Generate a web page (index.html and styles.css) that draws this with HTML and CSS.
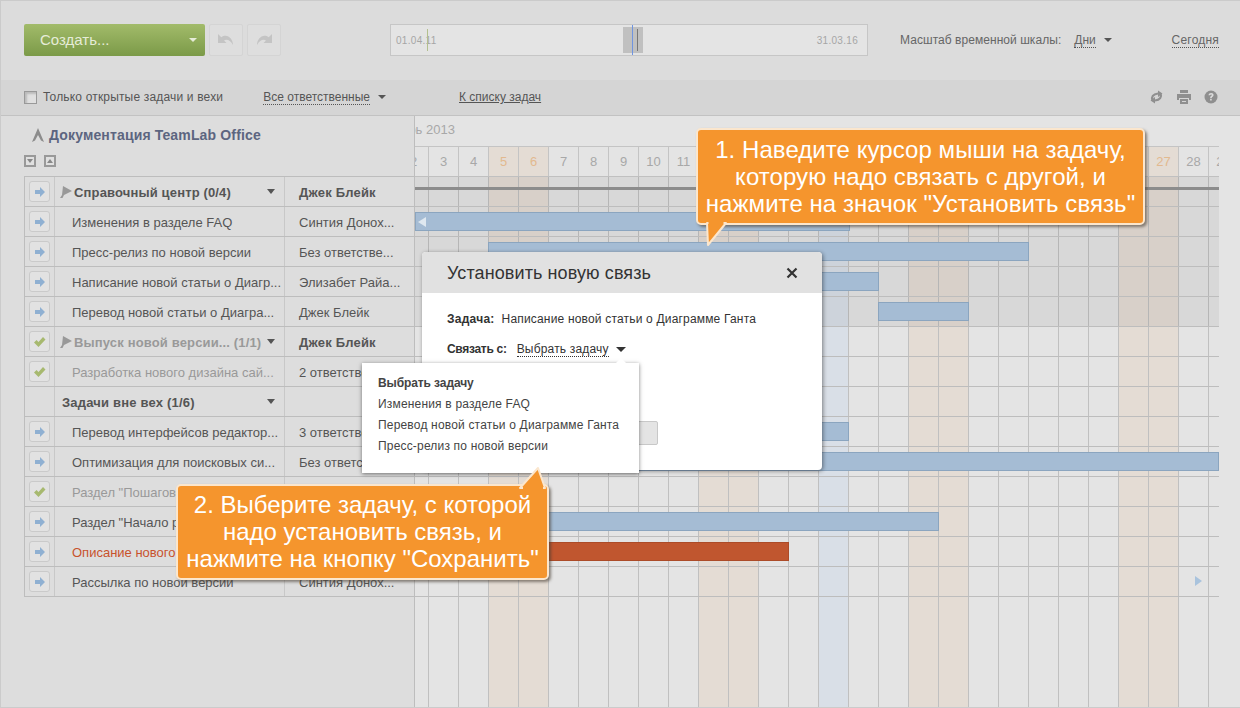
FILE: index.html
```html
<!DOCTYPE html>
<html lang="ru">
  <head>
    <meta charset="UTF-8" />
    <title>Диаграмма Ганта</title>
    <link rel="stylesheet" href="styles.css">
  </head>
  <body>
    <div class="page">
      <!-- Верхняя панель -->
      <header class="topbar">
        <button class="create-btn"><span>Создать...</span><i class="caret caret-light"></i></button>
        <button class="hist-btn">
          <svg width="18" height="14" viewBox="0 0 18 14"><path d="M1 1v9h8.500L7 7.500C9.500 6 13 6.500 16 12 16 5.500 10 0 4.300 4.300Z" fill="#c4c4c4"/></svg>
        </button>
        <button class="hist-btn">
          <svg width="18" height="14" viewBox="0 0 18 14"><path d="M17 1v9H8.500L11 7.500C8.500 6 5 6.500 2 12 2 5.500 8 0 13.700 4.300Z" fill="#c4c4c4"/></svg>
        </button>
        <div class="timeline">
          <span class="timeline-date">01.04.11</span>
          <i class="timeline-start"></i>
          <div class="timeline-thumb"><i class="now"></i><i class="grip"></i></div>
          <span class="timeline-date timeline-end">31.03.16</span>
        </div>
        <span class="scale-label">Масштаб временной шкалы:</span>
        <a class="dotted scale-value">Дни</a>
        <i class="caret"></i>
        <a class="dotted today-link">Сегодня</a>
      </header>

      <!-- Фильтры -->
      <div class="filterbar">
        <span class="checkbox"></span>
        <span class="filter-label">Только открытые задачи и вехи</span>
        <a class="dotted filter-resp">Все ответственные</a>
        <i class="caret"></i>
        <a class="list-link">К списку задач</a>
        <div class="tools">
          <svg width="15" height="14" viewBox="0 0 15 14"><path d="M3.500 10.500C2 7 4 4 9 3.500M11.500 3.500C13 7 11 10 6 10.500" fill="none" stroke="#8f8f8f" stroke-width="2.200"/><path d="M9 .5l4.500 3L9 7ZM6 13.500l-4.500-3L6 7Z" fill="#8f8f8f"/></svg>
          <svg width="14" height="14" viewBox="0 0 14 14"><path d="M3 0h8v3H3ZM0 4h14v6h-2V8H2v2H0ZM3 9h8v5H3Zm2 2v1h4v-1Z" fill="#8f8f8f"/></svg>
          <svg width="14" height="14" viewBox="0 0 14 14"><circle cx="7" cy="7" r="6.500" fill="#8f8f8f"/><path d="M4.500 5.200C4.700 3.700 5.700 3 7.100 3c1.500 0 2.500.9 2.500 2.100 0 1.800-1.900 1.700-1.900 3.100H6.100c0-2.200 1.800-2.200 1.800-3.100 0-.4-.3-.7-.8-.7-.6 0-.9.400-1 .9ZM6.100 9h1.600v1.600H6.100Z" fill="#dcdcdc"/></svg>
        </div>
      </div>

      <main class="workspace">
        <!-- Список задач -->
        <section class="tasks">
          <h1 class="project-title">
            <svg width="12" height="14" viewBox="0 0 12 14"><path d="M6 0l6 14-3-1.500L6 7 3 12.500 0 14Z" fill="#8c8c8c"/></svg>
            Документация TeamLab Office
          </h1>
          <div class="collapse-btns">
            <span class="collapse-btn"><i class="tri-down"></i></span>
            <span class="collapse-btn"><i class="tri-up"></i></span>
          </div>
          <div class="task-table" id="taskTable"></div>
        </section>

        <!-- Шкала -->
        <section class="chart">
          <div class="month">Октябрь 2013</div>
          <div class="days" id="days"></div>
          <div class="chart-body">
            <div class="columns" id="columns"></div>
            <div class="hover-band"></div>
            <div class="chart-rows" id="chartRows"></div>
          </div>
        </section>
      </main>

      <!-- Диалог связи -->
      <div class="dialog">
        <div class="dialog-head">
          <span class="dialog-title">Установить новую связь</span>
          <svg width="12" height="12" viewBox="0 0 12 12"><path d="M1.500 1.500l9 9M10.500 1.500l-9 9" stroke="#333" stroke-width="2.200"/></svg>
        </div>
        <div class="dialog-body">
          <p class="dialog-row"><b class="label-task">Задача:</b><span>Написание новой статьи о Диаграмме Ганта</span></p>
          <p class="dialog-row"><b class="label-link">Связать с:</b><a class="dotted link-select">Выбрать задачу</a><i class="caret caret-dark"></i></p>
          <button class="dialog-btn">Сохранить</button>
        </div>
      </div>
      <ul class="dropdown">
        <li class="selected">Выбрать задачу</li>
        <li>Изменения в разделе FAQ</li>
        <li>Перевод новой статьи о Диаграмме Ганта</li>
        <li>Пресс-релиз по новой версии</li>
      </ul>

      <!-- Подсказки -->
      <div class="callout callout-one">
        <svg class="tail" width="26" height="26" viewBox="0 0 26 26"><path d="M2 0L3 22 21 0Z" fill="#f5952d" stroke="#fbe6cd" stroke-width="2" stroke-linejoin="round"/><path d="M3.500 1h15v-3h-15Z" fill="#f5952d"/></svg>
        1. Наведите курсор мыши на задачу,<br>которую надо связать с другой, и<br>нажмите на значок "Установить связь"
      </div>
      <div class="callout callout-two">
        <svg class="tail" width="32" height="24" viewBox="0 0 32 24"><path d="M5 22L23 2 30 22Z" fill="#f5952d" stroke="#fbe6cd" stroke-width="2" stroke-linejoin="round"/><path d="M8 20h20v4H8Z" fill="#f5952d"/></svg>
        2. Выберите задачу, с которой<br>надо установить связь, и<br>нажмите на кнопку "Сохранить"
      </div>
    </div>

    <script src="gantt.js"></script>
  </body>
</html>
```

FILE: gantt.js
```js
// Строки таблицы: kind - group / task, state - open / done / late
const rows = [
  { icon: 'arrow', kind: 'group', flag: true, title: 'Справочный центр (0/4)', resp: 'Джек Блейк' },
  { icon: 'arrow', title: 'Изменения в разделе FAQ', resp: 'Синтия Донох...', bar: [0, 435], back: true },
  { icon: 'arrow', title: 'Пресс-релиз по новой версии', resp: 'Без ответстве...', bar: [73, 541] },
  { icon: 'arrow', title: 'Написание новой статьи о Диагр...', resp: 'Элизабет Райа...', bar: [73, 391] },
  { icon: 'arrow', title: 'Перевод новой статьи о Диагра...', resp: 'Джек Блейк', bar: [463, 91] },
  { icon: 'check', kind: 'group', flag: true, state: 'done', title: 'Выпуск новой версии... (1/1)', resp: 'Джек Блейк' },
  { icon: 'check', state: 'done', title: 'Разработка нового дизайна сай...', resp: '2 ответстве...' },
  { kind: 'free', title: 'Задачи вне вех (1/6)', resp: '' },
  { icon: 'arrow', title: 'Перевод интерфейсов редактор...', resp: '3 ответстве...', bar: [73, 361] },
  { icon: 'arrow', title: 'Оптимизация для поисковых си...', resp: 'Без ответстве...', bar: [73, 731] },
  { icon: 'check', state: 'done', title: 'Раздел "Пошаговое руководство"', resp: 'Джек Блейк' },
  { icon: 'arrow', title: 'Раздел "Начало работы"', resp: 'Джек Блейк', bar: [73, 451] },
  { icon: 'arrow', state: 'late', title: 'Описание нового функционала', resp: 'Джек Блейк', bar: [73, 301], red: true },
  { icon: 'arrow', title: 'Рассылка по новой версии', resp: 'Синтия Донох...', next: true },
];

const ICONS = {
  arrow: '<svg width="10" height="10" viewBox="0 0 10 10"><path d="M0 3h5V0l5 5-5 5V7H0Z" fill="#8fb0d2"/></svg>',
  check: '<svg width="12" height="10" viewBox="0 0 12 10"><path d="M0 5.500L2.500 3l2 2L9 0l2.500 2.500L4.500 10Z" fill="#a7b96f"/></svg>',
};
const FLAG = '<svg class="flag" width="12" height="14" viewBox="0 0 12 14"><path d="M3 1l9 5-8 4-1.500 3H0l2-3Z" fill="#999"/></svg>';

const taskTable = document.getElementById('taskTable');
const chartRows = document.getElementById('chartRows');

rows.forEach((row, i) => {
  const kind = row.kind || 'task';
  const state = row.state || 'open';
  const iconBox = row.icon ? `<span class="icon-box">${ICONS[row.icon]}</span>` : '';
  const caret = kind === 'task' ? '' : '<i class="caret caret-row"></i>';

  taskTable.insertAdjacentHTML('beforeend', `
    <div class="task-row">
      <div class="cell cell-icon">${iconBox}</div>
      <div class="cell cell-title ${kind} ${state}">${row.flag ? FLAG : ''}<span class="title-text">${row.title}</span>${caret}</div>
      <div class="cell cell-resp ${kind === 'task' ? '' : 'strong'}">${row.resp}</div>
    </div>`);

  let inner = '';
  if (row.bar) {
    const cls = row.red ? 'bar bar-red' : 'bar';
    inner = `<div class="${cls}" style="margin-left:${row.bar[0]}px;width:${row.bar[1]}px">${row.back ? '<i class="bar-back"></i>' : ''}</div>`;
  }
  if (i === 0) inner = '<div class="milestone-line"></div>';
  if (row.next) inner = '<i class="scroll-next"></i>';
  chartRows.insertAdjacentHTML('beforeend', `<div class="chart-row">${inner}</div>`);
});

// Дни месяца, начиная со 2 октября
const days = document.getElementById('days');
const columns = document.getElementById('columns');
for (let d = 2; d <= 29; d++) {
  const weekend = [5, 6, 12, 13, 19, 20, 26, 27].includes(d);
  const cls = weekend ? 'weekend' : d === 16 ? 'today' : '';
  days.insertAdjacentHTML('beforeend', `<div class="day ${weekend ? 'weekend' : ''}">${d}</div>`);
  columns.insertAdjacentHTML('beforeend', `<div class="col ${cls}"></div>`);
}
```

FILE: styles.css
```css
* {
  box-sizing: border-box;
}

body {
  margin: 0;
  background-color: #e4e4e4;
  font-family: "Liberation Sans", Arial, sans-serif;
  font-size: 12px;
  color: #555;
  overflow: hidden;
}

.page {
  position: relative;
  width: 1240px;
  height: 708px;
  display: flex;
  flex-direction: column;
  overflow: hidden;
  border-top: 1px solid #cbcbcb;
  border-left: 1px solid #cbcbcb;
  border-bottom: 1px solid #cbcbcb;
}

i {
  display: inline-block;
}

.dotted {
  border-bottom: 1px dotted #555;
  line-height: 14px;
}

.caret {
  width: 0;
  height: 0;
  border-style: solid;
  border-width: 4px 4px 0;
  border-color: #555 transparent transparent;
}

.caret-light {
  border-top-color: #e6ecd8;
}

.caret-dark {
  border-top-color: #333;
  border-width: 5px 5px 0;
  margin-left: 7px;
}

/* Верхняя панель */
.topbar {
  height: 79px;
  flex: none;
  display: flex;
  align-items: center;
  padding: 0 21px 1px 23px;
  background: #dcdcdc;
  color: #666;
}

.create-btn {
  width: 181px;
  height: 32px;
  display: flex;
  align-items: center;
  justify-content: space-between;
  padding: 0 8px 2px 16px;
  border: 0;
  border-radius: 2px;
  background: linear-gradient(#a2bb6a, #7b9a48);
  color: #e6ecd8;
  font: 15px "Liberation Sans", Arial, sans-serif;
}

.hist-btn {
  width: 34px;
  height: 32px;
  margin-left: 4px;
  padding: 0;
  display: flex;
  align-items: center;
  justify-content: center;
  background: #dedede;
  border: 1px solid #d4d4d4;
  border-radius: 2px;
}

.timeline {
  position: relative;
  width: 478px;
  height: 32px;
  margin-left: 109px;
  display: flex;
  align-items: center;
  justify-content: space-between;
  padding: 0 5px;
  background: #e4e4e4;
  border: 1px solid #c6c6c6;
}

.timeline-date {
  font-size: 10px;
  letter-spacing: 0.3px;
  color: #a6a6a6;
}

.timeline-end {
  margin-right: 4px;
}

.timeline-start {
  position: absolute;
  left: 36px;
  top: 4px;
  width: 1px;
  height: 22px;
  background: #b3c08f;
}

.timeline-thumb {
  position: absolute;
  left: 232px;
  top: 2px;
  width: 20px;
  height: 26px;
  background: #c0c0c0;
}

.now,
.grip {
  position: absolute;
  width: 1px;
}

.now {
  left: 9px;
  top: -2px;
  height: 30px;
  background: #6f94e0;
}

.grip {
  left: 14px;
  top: 2px;
  height: 22px;
  background: #777;
}

.scale-label {
  margin-left: 32px;
  letter-spacing: 0.05px;
}

.scale-value {
  margin-left: 13px;
}

.topbar .caret {
  margin-left: 8px;
}

.topbar .create-btn .caret {
  margin: 2px 0 0;
}

.today-link {
  margin-left: auto;
  letter-spacing: 0.2px;
}

/* Фильтры */
.filterbar {
  height: 36px;
  flex: none;
  display: flex;
  align-items: center;
  padding: 0 22px 1px 23px;
  background: #d5d5d5;
  border-bottom: 1px solid #c2c2c2;
}

.checkbox {
  width: 13px;
  height: 13px;
  background: #e0e0e0;
  border: 1px solid #999;
  box-shadow: inset 2px 2px 2px #bbb;
}

.filter-label {
  margin-left: 6px;
  letter-spacing: 0.17px;
}

.filter-resp {
  margin-left: 40px;
}

.filterbar .caret {
  margin-left: 8px;
}

.list-link {
  margin-left: 73px;
  text-decoration: underline;
}

.tools {
  margin-left: auto;
  display: flex;
  align-items: center;
  gap: 13px;
}

/* Рабочая область */
.workspace {
  flex: 1;
  display: flex;
  min-height: 0;
}

.tasks {
  width: 414px;
  flex: none;
  padding-left: 23px;
  background: #dddddd;
  border-right: 1px solid #bdbdbd;
}

.project-title {
  margin: 11px 0 0 8px;
  height: 16px;
  display: flex;
  align-items: center;
  gap: 5px;
  font-size: 14px;
  font-weight: bold;
  letter-spacing: 0.15px;
  color: #5c6580;
}

.collapse-btns {
  display: flex;
  gap: 8px;
  margin-top: 12px;
  height: 21px;
}

.collapse-btn {
  width: 12px;
  height: 12px;
  display: flex;
  align-items: center;
  justify-content: center;
  background: #e0e0e0;
  border: 2px solid #999;
}

.tri-down,
.tri-up {
  width: 0;
  height: 0;
  border-style: solid;
  border-color: transparent;
}

.tri-down {
  border-width: 4px 3px 0;
  border-top-color: #888;
}

.tri-up {
  border-width: 0 3px 4px;
  border-bottom-color: #888;
}

.task-table {
  border-top: 1px solid #bdbdbd;
  border-left: 1px solid #bdbdbd;
}

.task-row {
  display: grid;
  grid-template-columns: 30px 230px 130px;
  height: 30px;
  border-bottom: 1px solid #bdbdbd;
}

.cell {
  display: flex;
  align-items: center;
  border-right: 1px solid #c8c8c8;
  white-space: nowrap;
  overflow: hidden;
}

.cell:last-child {
  border-right: 0;
}

.cell-icon {
  justify-content: center;
}

.icon-box {
  width: 21px;
  height: 21px;
  display: flex;
  align-items: center;
  justify-content: center;
  background: #e2e2e2;
  border: 1px solid #cacaca;
  border-radius: 3px;
}

.cell-title {
  font-size: 13px;
  padding: 2px 6px 0 17px;
  position: relative;
}

.cell-title.group {
  padding-left: 5px;
  font-weight: bold;
  letter-spacing: 0.15px;
}

.cell-title.free {
  padding-left: 7px;
  font-weight: bold;
  letter-spacing: 0.2px;
}

.cell-title.done {
  color: #999;
}

.cell-title.late {
  color: #c8522c;
}

.flag {
  margin: -2px 2px 0 0;
}

.caret-row {
  position: absolute;
  right: 9px;
  top: 12px;
  border-width: 5px 4px 0;
}

.cell-resp {
  font-size: 13px;
  padding: 2px 0 0 14px;
}

.cell-resp.strong {
  font-weight: bold;
  letter-spacing: 0.2px;
}

/* Шкала */
.chart {
  width: 804px;
  flex: none;
  display: flex;
  flex-direction: column;
  overflow: hidden;
  color: #a8a8a8;
}

.month {
  height: 30px;
  line-height: 27px;
  font-size: 13px;
  text-indent: -43px;
  white-space: nowrap;
}

.days {
  height: 31px;
  display: flex;
  margin-left: -16px;
  border-top: 1px solid #c4c4c4;
  border-bottom: 1px solid #c0c0c0;
  font-size: 13px;
}

.day {
  width: 30px;
  flex: none;
  display: flex;
  align-items: center;
  justify-content: center;
  border-right: 1px solid #c4c4c4;
}

.day.weekend {
  color: #e2b98f;
  background: #e4dcd4;
}

.chart-body {
  position: relative;
  flex: 1;
  min-height: 0;
}

.columns {
  position: absolute;
  top: 0;
  bottom: 0;
  left: -16px;
  display: flex;
}

.col {
  width: 30px;
  flex: none;
  border-right: 1px solid #c0c0c0;
}

.col.weekend {
  background: #e4dcd4;
}

.col.today {
  background: #d9dfe7;
}

.hover-band {
  position: absolute;
  top: 0;
  left: 0;
  right: 0;
  height: 150px;
  background: rgba(0, 0, 0, 0.05);
}

.chart-rows {
  position: relative;
}

.chart-row {
  height: 30px;
  padding-top: 5px;
  border-bottom: 1px solid #bdbdbd;
}

.bar {
  position: relative;
  height: 19px;
  background: #a5bcd4;
  border: 1px solid #8ba5bf;
}

.bar-red {
  background: #c0562f;
  border-color: #ac4b28;
}

.bar-back {
  position: absolute;
  left: 2px;
  top: 4px;
  border-style: solid;
  border-width: 5px 8px 5px 0;
  border-color: transparent #dfe8f0 transparent transparent;
}

.milestone-line {
  height: 3px;
  margin-top: 5px;
  background: #8c8c8c;
}

.scroll-next {
  display: block;
  margin: 4px 0 0 780px;
  width: 0;
  height: 0;
  border-style: solid;
  border-width: 5px 0 5px 7px;
  border-color: transparent transparent transparent #a9c3dd;
}

/* Диалог */
.dialog {
  position: absolute;
  left: 421px;
  top: 251px;
  width: 400px;
  height: 218px;
  background: #fff;
  border-radius: 4px;
  box-shadow: 1px 1px 4px rgba(0, 0, 0, 0.45);
  color: #333;
}

.dialog-head {
  height: 41px;
  display: flex;
  align-items: center;
  justify-content: space-between;
  padding: 0 24px 0 25px;
  background: #e1e1e1;
  border-radius: 4px 4px 0 0;
  font-size: 18px;
  letter-spacing: 0.1px;
}

.dialog-title {
  margin-top: 2px;
}

.dialog-body {
  position: relative;
  padding: 18px 25px;
}

.dialog-row {
  margin: 0 0 14px;
  height: 16px;
  display: flex;
  align-items: center;
  letter-spacing: 0.18px;
}

.label-task {
  margin-right: 7px;
  letter-spacing: 0.25px;
}

.label-link {
  margin-right: 10px;
  letter-spacing: -0.3px;
}

.link-select {
  border-bottom-color: #333;
}

.dialog-btn {
  position: absolute;
  left: 25px;
  top: 128px;
  width: 211px;
  height: 24px;
  background: #e4e4e4;
  border: 1px solid #c8c8c8;
  border-radius: 2px;
  font: 12px "Liberation Sans", Arial, sans-serif;
}

.dropdown {
  position: absolute;
  left: 361px;
  top: 362px;
  width: 277px;
  height: 110px;
  margin: 0;
  padding: 10px 16px;
  list-style: none;
  background: #fff;
  box-shadow: 0 1px 4px rgba(0, 0, 0, 0.5);
  color: #444;
  letter-spacing: 0.18px;
}

.dropdown::before {
  content: "";
  position: absolute;
  left: 254px;
  top: -5px;
  border-style: solid;
  border-width: 0 5px 5px;
  border-color: transparent transparent #fff;
}

.dropdown li {
  height: 21px;
  line-height: 21px;
}

.dropdown .selected {
  font-weight: bold;
  letter-spacing: -0.1px;
}

/* Подсказки */
.callout {
  position: absolute;
  background: #f5952d;
  border: 2px solid #fbe6cd;
  border-radius: 5px;
  box-shadow: 2px 2px 3px rgba(70, 60, 50, 0.6);
  color: #fff;
  font-size: 24px;
  line-height: 27px;
  text-align: center;
  white-space: nowrap;
}

.callout-one {
  left: 695px;
  top: 127px;
  width: 449px;
  height: 97px;
  padding-top: 6px;
  letter-spacing: 0.06px;
}

.callout-two {
  left: 175px;
  top: 483px;
  width: 373px;
  height: 96px;
  padding-top: 5px;
}

.tail {
  position: absolute;
  overflow: visible;
}

.callout-one .tail {
  left: 7px;
  top: 93px;
}

.callout-two .tail {
  right: 0;
  top: -20px;
}
```
